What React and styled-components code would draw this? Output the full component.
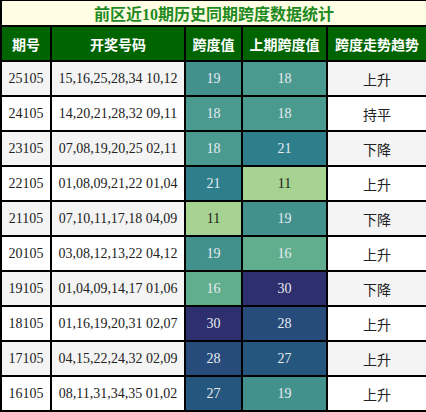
import React from 'react';
import styled, {createGlobalStyle} from 'styled-components';

const GlobalStyle = createGlobalStyle`
    html, body {
        margin: 0;
        padding: 0;
        background: #fff;
    }
`;

const Table = styled.table`
    width: 426px;
    border-collapse: collapse;
    table-layout: fixed;
    font-family: "Liberation Serif", "Noto Sans CJK SC", serif;
    font-size: 14px;
    color: #222;
`;

const TitleCell = styled.th`
    height: 24px;
    padding: 0;
    background: #fffde3;
    color: #1f8a1f;
    font-size: 16px;
    font-weight: bold;
    font-family: "Liberation Serif", "Noto Sans CJK SC", sans-serif;
    border: 2px solid #000;
    border-top-width: 1px;
    text-align: center;
`;

const HeadCell = styled.th`
    height: 33px;
    padding: 0;
    background: #006400;
    color: #fff;
    font-family: "Noto Sans CJK SC", sans-serif;
    font-size: 14px;
    font-weight: bold;
    border: 2px solid #000;
    text-align: center;
`;

const Row = styled.tr`
    background: ${p => (p.$odd ? '#f4f4f4' : '#fff')};
`;

const Cell = styled.td`
    height: 33px;
    padding: 0;
    border: 2px solid #000;
    text-align: center;
    white-space: nowrap;
`;

const SpanCell = styled(Cell)`
    background: ${p => p.$bg};
    color: ${p => (p.$dark ? '#1e1e1e' : '#e6ecf0')};
`;

const TrendCell = styled(Cell)`
    font-family: "Noto Sans CJK SC", sans-serif;
`;

// 跨度值对应的颜色
const palette = {
    11: '#a6d391',
    16: '#61ae8f',
    18: '#4b9a8f',
    19: '#43918d',
    21: '#2e7f8b',
    27: '#25577e',
    28: '#274c7c',
    30: '#2d2f6e'
};

const rows = [
    ['25105', '15,16,25,28,34 10,12', 19, 18, '上升'],
    ['24105', '14,20,21,28,32 09,11', 18, 18, '持平'],
    ['23105', '07,08,19,20,25 02,11', 18, 21, '下降'],
    ['22105', '01,08,09,21,22 01,04', 21, 11, '上升'],
    ['21105', '07,10,11,17,18 04,09', 11, 19, '下降'],
    ['20105', '03,08,12,13,22 04,12', 19, 16, '上升'],
    ['19105', '01,04,09,14,17 01,06', 16, 30, '下降'],
    ['18105', '01,16,19,20,31 02,07', 30, 28, '上升'],
    ['17105', '04,15,22,24,32 02,09', 28, 27, '上升'],
    ['16105', '08,11,31,34,35 01,02', 27, 19, '上升']
];

const Span = ({value}) => (
    <SpanCell $bg={palette[value]} $dark={value < 14}>{value}</SpanCell>
);

export default function App() {
    return (
        <>
            <GlobalStyle/>
            <Table>
                <colgroup>
                    <col style={{width: 50}}/>
                    <col style={{width: 134}}/>
                    <col style={{width: 57}}/>
                    <col style={{width: 85}}/>
                    <col style={{width: 100}}/>
                </colgroup>
                <thead>
                    <tr>
                        <TitleCell colSpan={5}>前区近10期历史同期跨度数据统计</TitleCell>
                    </tr>
                    <tr>
                        <HeadCell>期号</HeadCell>
                        <HeadCell>开奖号码</HeadCell>
                        <HeadCell>跨度值</HeadCell>
                        <HeadCell>上期跨度值</HeadCell>
                        <HeadCell>跨度走势趋势</HeadCell>
                    </tr>
                </thead>
                <tbody>
                    {rows.map(([issue, nums, span, prev, trend], i) => (
                        <Row key={issue} $odd={i % 2 === 0}>
                            <Cell>{issue}</Cell>
                            <Cell>{nums}</Cell>
                            <Span value={span}/>
                            <Span value={prev}/>
                            <TrendCell>{trend}</TrendCell>
                        </Row>
                    ))}
                </tbody>
            </Table>
        </>
    );
}
